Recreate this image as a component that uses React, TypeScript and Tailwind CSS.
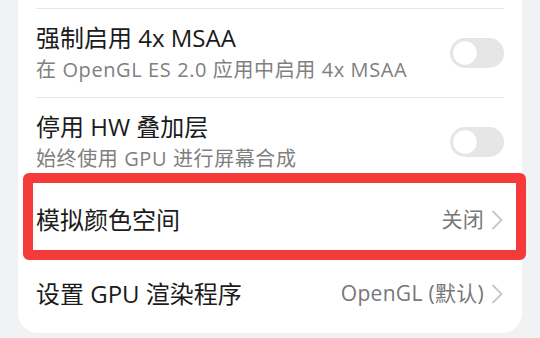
import { ReactNode } from "react";

const font = { fontFamily: '"Open Sans", "Noto Sans CJK SC", sans-serif' };

function Toggle() {
    return (
        <div className="flex items-center w-[54px] h-[30px] rounded-full bg-[#e6e6e6] px-[2px] shrink-0">
            <div className="w-[26px] h-[26px] rounded-full bg-white border border-[#e2e2e2]" />
        </div>
    );
}

function Chevron() {
    return (
        <svg width="13" height="20" viewBox="0 0 13 20" className="shrink-0">
            <path d="M2 1.5 L10.5 10 L2 18.5" fill="none" stroke="#c6c6c6" strokeWidth="1.8" strokeLinecap="round" strokeLinejoin="round" />
        </svg>
    );
}

function SwitchRow({ title, desc }: { title: string; desc: string }) {
    return (
        <div className="flex items-center justify-between h-[88px]">
            <div className="flex flex-col gap-[3px]">
                <div className="text-[24px] leading-[30px] text-[#1b1b1b]">{title}</div>
                <div className="text-[20px] leading-[28px] tracking-[0.6px] text-[#808080]">{desc}</div>
            </div>
            <Toggle />
        </div>
    );
}

function LinkRow({ title, value, className }: { title: string; value: ReactNode; className: string }) {
    return (
        <div className={`flex items-center justify-between ${className}`}>
            <div className="text-[24px] text-[#1b1b1b]">{title}</div>
            <div className="flex items-center gap-[7px]">
                <span className="text-[21px] tracking-[0.3px] text-[#777777]">{value}</span>
                <Chevron />
            </div>
        </div>
    );
}

export default function App() {
    return (
        <div className="relative w-[540px] h-[338px] overflow-hidden bg-[#f1f2f4]" style={font}>
            <div className="mx-[18px] bg-white rounded-b-[20px] px-[18px] pt-2">
                <div className="h-px bg-[#e6e6e6]" />
                <SwitchRow title="强制启用 4x MSAA" desc="在 OpenGL ES 2.0 应用中启用 4x MSAA" />
                <div className="h-px bg-[#e6e6e6]" />
                <SwitchRow title="停用 HW 叠加层" desc="始终使用 GPU 进行屏幕合成" />
                <LinkRow title="模拟颜色空间" value="关闭" className="h-[68px]" />
                <LinkRow title="设置 GPU 渲染程序" value="OpenGL (默认)" className="h-[79px]" />
            </div>
            {/* annotation box */}
            <div className="absolute left-[23px] top-[173px] w-[503px] h-[87px] border-[10px] border-[#f53a3a] rounded-[6px]" />
        </div>
    );
}
